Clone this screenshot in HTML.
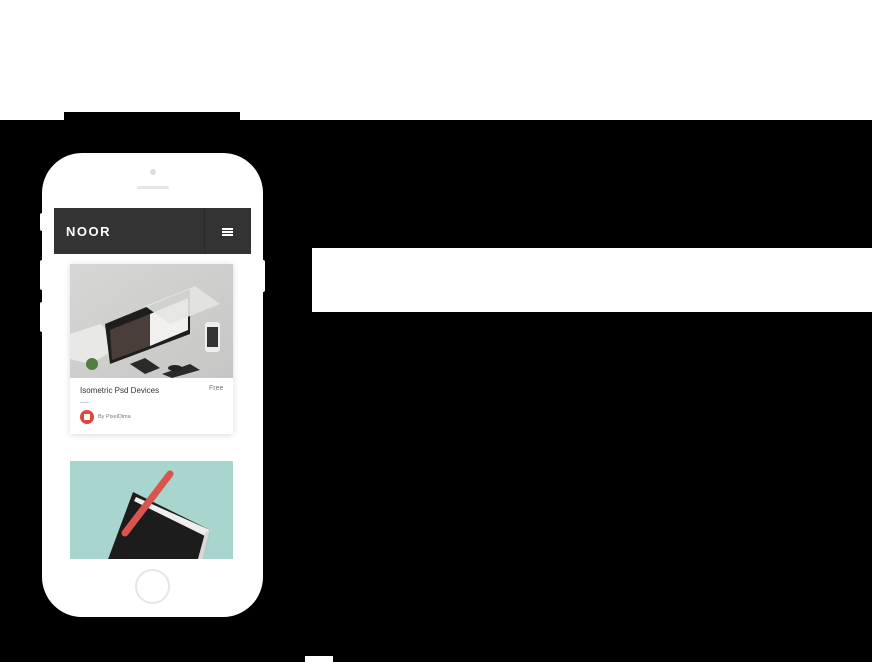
<!DOCTYPE html>
<html><head><style>
body{margin:0;width:872px;height:662px;position:relative;overflow:hidden;background:#000;font-family:"Liberation Sans",sans-serif}
div{position:absolute;box-sizing:border-box}
</style></head><body>
<div style="left:0;top:0;width:872px;height:120px;background:#fff"></div>
<div style="left:64px;top:112px;width:176px;height:8px;background:#000"></div>
<div style="left:312px;top:248px;width:560px;height:64px;background:#fff"></div>
<div style="left:305px;top:656px;width:28px;height:6px;background:#fff"></div>
<div style="left:40px;top:213px;width:4px;height:18px;background:#fff;border-radius:2px"></div>
<div style="left:40px;top:260px;width:4px;height:30px;background:#fff;border-radius:2px"></div>
<div style="left:40px;top:302px;width:4px;height:30px;background:#fff;border-radius:2px"></div>
<div style="left:261px;top:260px;width:4px;height:32px;background:#fff;border-radius:2px"></div>
<div style="left:42px;top:153px;width:221px;height:464px;background:#fff;border-radius:40px"></div>
<div style="left:150px;top:169px;width:6px;height:6px;border-radius:50%;background:#ddd"></div>
<div style="left:137px;top:186px;width:32px;height:3px;border-radius:2px;background:#e6e6e6"></div>
<div style="left:54px;top:208px;width:197px;height:46px;background:#333"></div>
<div style="left:204px;top:208px;width:1px;height:46px;background:#2a2a2a"></div>
<div style="left:66px;top:224px;color:#fff;font-size:13px;font-weight:bold;letter-spacing:1.5px">NOOR</div>
<div style="left:222px;top:228px;width:11px;height:2px;background:#fff;box-shadow:0 3px 0 #fff,0 6px 0 #fff"></div>
<div style="left:70px;top:264px;width:163px;height:170px;background:#fff;box-shadow:0 1px 6px rgba(0,0,0,.15)"></div>
<svg style="position:absolute;left:70px;top:264px" width="163" height="114" viewBox="0 0 163 114">
<defs><linearGradient id="g" x1="0" y1="0" x2="1" y2="1"><stop offset="0" stop-color="#d6d6d4"/><stop offset="1" stop-color="#c6c6c4"/></linearGradient></defs>
<rect width="163" height="114" fill="url(#g)"/>
<polygon points="0,70 30,60 55,80 20,100 0,95" fill="#e8e8e6"/>
<polygon points="35,60 120,25 120,70 40,100" fill="#1e1e1e"/>
<polygon points="40,66 80,50 80,82 42,96" fill="#4a3f38"/>
<polygon points="80,50 118,34 118,66 80,82" fill="#f0f0ef"/>
<polygon points="75,42 125,22 150,40 100,60" fill="#e4e4e2" opacity=".9"/>
<polygon points="60,100 75,94 90,104 75,110" fill="#2a2a2a"/>
<polygon points="92,110 120,100 130,106 102,114" fill="#2a2a2a"/>
<ellipse cx="105" cy="104" rx="7" ry="3" fill="#222"/>
<rect x="135" y="58" width="15" height="30" rx="3" fill="#eee"/>
<rect x="137" y="63" width="11" height="20" fill="#333"/>
<circle cx="22" cy="100" r="6" fill="#4f7f3f"/>
</svg>
<div style="left:80px;top:386px;font-size:8px;color:#333">Isometric Psd Devices</div>
<div style="left:209px;top:385px;font-size:7px;color:#777">Free</div>
<div style="left:80px;top:402px;width:9px;height:1px;background:#ccc"></div>
<div style="left:80px;top:410px;width:14px;height:14px;border-radius:50%;background:#e0473c"></div>
<div style="left:84px;top:414px;width:6px;height:6px;background:#fff"></div>
<div style="left:98px;top:414px;font-size:5.5px;color:#777">By PixelDima</div>
<svg style="position:absolute;left:70px;top:461px" width="163" height="98" viewBox="0 0 163 98">
<rect width="163" height="98" fill="#a9d5cf"/>
<polygon points="63,31 140,69 128,120 30,120" fill="#1c1c1c"/>
<polygon points="66,36 140,69 137,76 64,40" fill="#eee"/>
<polygon points="140,69 128,120 122,120 135,72" fill="#d8d8d8"/>
<line x1="100" y1="13" x2="55" y2="72" stroke="#d9534f" stroke-width="7" stroke-linecap="round"/>
</svg>
<div style="left:135px;top:569px;width:35px;height:35px;border-radius:50%;border:2px solid #e6e6e6"></div>
</body></html>
